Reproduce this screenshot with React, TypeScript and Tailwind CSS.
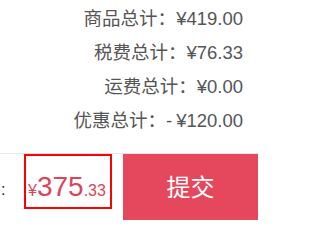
export default function App() {
  const rows = [
    { label: '商品总计：', value: '¥419.00' },
    { label: '税费总计：', value: '¥76.33' },
    { label: '运费总计：', value: '¥0.00' },
    { label: '优惠总计：', value: '¥120.00', minus: true },
  ];

  return (
    <div
      className="h-[220px] w-[258px] overflow-hidden bg-white"
      style={{ fontFamily: '"Liberation Sans", "Noto Sans CJK SC", sans-serif' }}
    >
      <div className="flex flex-col items-end pt-[2px] pr-[15px] text-[18.5px] text-[#555]">
        {rows.map((row) => (
          <div key={row.label} className="h-[34px] whitespace-nowrap leading-[34px]">
            {row.label}
            {row.minus ? <span className="mr-[4px]">-</span> : null}
            {row.value}
          </div>
        ))}
      </div>

      <div className="mt-[15px] flex h-[67px] border-t border-[#e5e5e5]">
        <div className="flex flex-1 items-start">
          <span className="mt-[28px] w-[24px] pl-[1px] text-[16px] leading-[16px] text-[#222]">:</span>
          <div className="flex h-[55px] w-[88px] items-baseline border-2 border-[#ff0000] pt-[17px] pl-[2px] leading-none text-[#dc4459]">
            <span className="text-[16px]">¥</span>
            <span className="text-[28px]">375</span>
            <span className="text-[16px]">.33</span>
          </div>
        </div>
        <button
          type="button"
          className="flex h-full w-[135px] items-center justify-center bg-[#e5475c] pt-[2px] text-[24px] text-white"
        >
          提交
        </button>
      </div>
    </div>
  );
}
